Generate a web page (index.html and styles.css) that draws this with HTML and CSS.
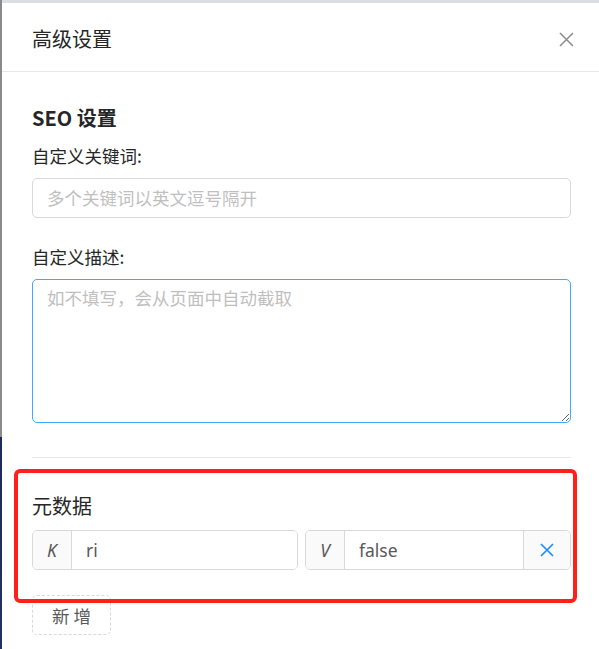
FILE: index.html
```html
<!DOCTYPE html>
<html lang="zh-CN">
<head>
<meta charset="utf-8">
<title>高级设置</title>
<link rel="stylesheet" href="styles.css">
</head>
<body>
<div class="screen">
  <div class="backdrop-edge"></div>
  <div class="drawer">
    <div class="drawer-top"></div>
    <div class="drawer-header">
      <div class="drawer-title">高级设置</div>
      <button class="close-btn" aria-label="关闭">
        <svg width="15" height="15" viewBox="0 0 15 15"><path d="M1 1 L14 14 M14 1 L1 14" stroke="#8c8c8c" stroke-width="1.5" fill="none"/></svg>
      </button>
    </div>
    <div class="drawer-body">
      <div class="section-title seo">SEO 设置</div>
      <div class="form-item">
        <div class="label">自定义关键词:</div>
        <input class="text-input" type="text" placeholder="多个关键词以英文逗号隔开">
      </div>
      <div class="form-item">
        <div class="label">自定义描述:</div>
        <textarea class="text-area" placeholder="如不填写，会从页面中自动截取"></textarea>
      </div>
      <div class="divider"></div>
      <div class="section-title">元数据</div>
      <div class="kv-row">
        <div class="group">
          <span class="addon">K</span>
          <input class="group-input" type="text" value="ri">
        </div>
        <div class="group">
          <span class="addon">V</span>
          <input class="group-input" type="text" value="false">
          <button class="remove-btn" aria-label="删除">
            <svg width="14" height="14" viewBox="0 0 14 14"><path d="M1 1 L13 13 M13 1 L1 13" stroke="#1890ff" stroke-width="1.7" fill="none"/></svg>
          </button>
        </div>
      </div>
      <button class="add-btn">新 增</button>
    </div>
  </div>
  <div class="annotation"></div>
</div>
</body>
</html>
```

FILE: styles.css
```css
* { box-sizing: border-box; }
html, body {
  margin: 0;
  padding: 0;
  background: #ffffff;
  overflow: hidden;
}
body {
  font-family: "Segoe UI", "Noto Sans", "Noto Sans CJK SC", sans-serif;
  color: #262626;
}
.screen {
  position: relative;
  display: flex;
  width: 599px;
  height: 649px;
  overflow: hidden;
}
.backdrop-edge {
  flex: 0 0 2px;
  background: linear-gradient(#8a8a8a 0, #8a8a8a 437px, #1e2a58 437px, #24325f 100%);
}
.drawer {
  flex: 0 0 599px;
  width: 599px;
  background: #ffffff;
  display: flex;
  flex-direction: column;
}
.drawer-top {
  height: 3px;
  background: #dcdce3;
}
.drawer-header {
  height: 69px;
  display: flex;
  align-items: flex-start;
  justify-content: space-between;
  padding: 22px 27px 0 30px;
  border-bottom: 1px solid #e8e8e8;
}
.drawer-title {
  font-family: "Noto Sans CJK SC", sans-serif;
  font-size: 20px;
  line-height: 28px;
  color: #262626;
}
.close-btn {
  border: 0;
  background: transparent;
  padding: 0;
  margin-top: 7px;
  width: 15px;
  height: 15px;
  display: flex;
}
.drawer-body {
  padding: 32px 30px 0 30px;
  display: flex;
  flex-direction: column;
  align-items: stretch;
}
.section-title {
  font-family: "Noto Sans CJK SC", sans-serif;
  font-size: 20px;
  line-height: 28px;
  margin-bottom: 10px;
  color: #262626;
}
.section-title.seo {
  font-weight: 600;
}
.form-item {
  display: flex;
  flex-direction: column;
  margin-bottom: 25px;
}
.label {
  font-family: "Noto Sans CJK SC", sans-serif;
  font-size: 17.5px;
  line-height: 28px;
  margin-bottom: 8px;
  color: #262626;
}
.text-input,
.text-area,
.group-input {
  font-family: "Segoe UI", "Noto Sans", "Noto Sans CJK SC", sans-serif;
  font-size: 17.5px;
  color: #595959;
  outline: none;
}
.text-input::placeholder,
.text-area::placeholder {
  font-family: "Noto Sans CJK SC", sans-serif;
  color: #bfbfbf;
}
.text-input {
  height: 40px;
  border: 1px solid #d9d9d9;
  border-radius: 5px;
  padding: 0 14px;
  background: #fff;
}
.text-area {
  height: 144px;
  border: 1px solid #40a9ff;
  border-radius: 5px;
  padding: 5px 14px;
  line-height: 26px;
  resize: vertical;
  background: #fff;
}
.form-item.last { margin-bottom: 0; }
.divider {
  height: 1px;
  background: #e8e8e8;
  margin: 9px 0 34px 0;
}
.kv-row {
  display: grid;
  grid-template-columns: 1fr 1fr;
  gap: 7px;
  margin-bottom: 25px;
}
.group {
  display: flex;
  height: 40px;
  border: 1px solid #d9d9d9;
  border-radius: 5px;
  overflow: hidden;
}
.addon {
  flex: 0 0 39px;
  background: #fafafa;
  border-right: 1px solid #d9d9d9;
  display: flex;
  align-items: center;
  justify-content: center;
  font-family: "Segoe UI", "Noto Sans", sans-serif;
  font-style: italic;
  font-size: 17.5px;
  color: #595959;
}
.group-input {
  flex: 1;
  min-width: 0;
  border: 0;
  padding: 0 14px;
  background: #fff;
}
.remove-btn {
  flex: 0 0 47px;
  border: 0;
  border-left: 1px solid #d9d9d9;
  background: #fafafa;
  display: flex;
  align-items: center;
  justify-content: center;
  padding: 0;
}
.add-btn {
  align-self: flex-start;
  height: 40px;
  width: 79px;
  border: 1px dashed #d9d9d9;
  border-radius: 5px;
  background: #fff;
  font-family: "Noto Sans CJK SC", sans-serif;
  font-size: 17.5px;
  color: #595959;
  padding: 0;
}
.annotation {
  position: absolute;
  left: 14px;
  top: 469px;
  width: 563px;
  height: 134px;
  border: 4px solid #ff2119;
  border-radius: 6px;
  pointer-events: none;
}
```
